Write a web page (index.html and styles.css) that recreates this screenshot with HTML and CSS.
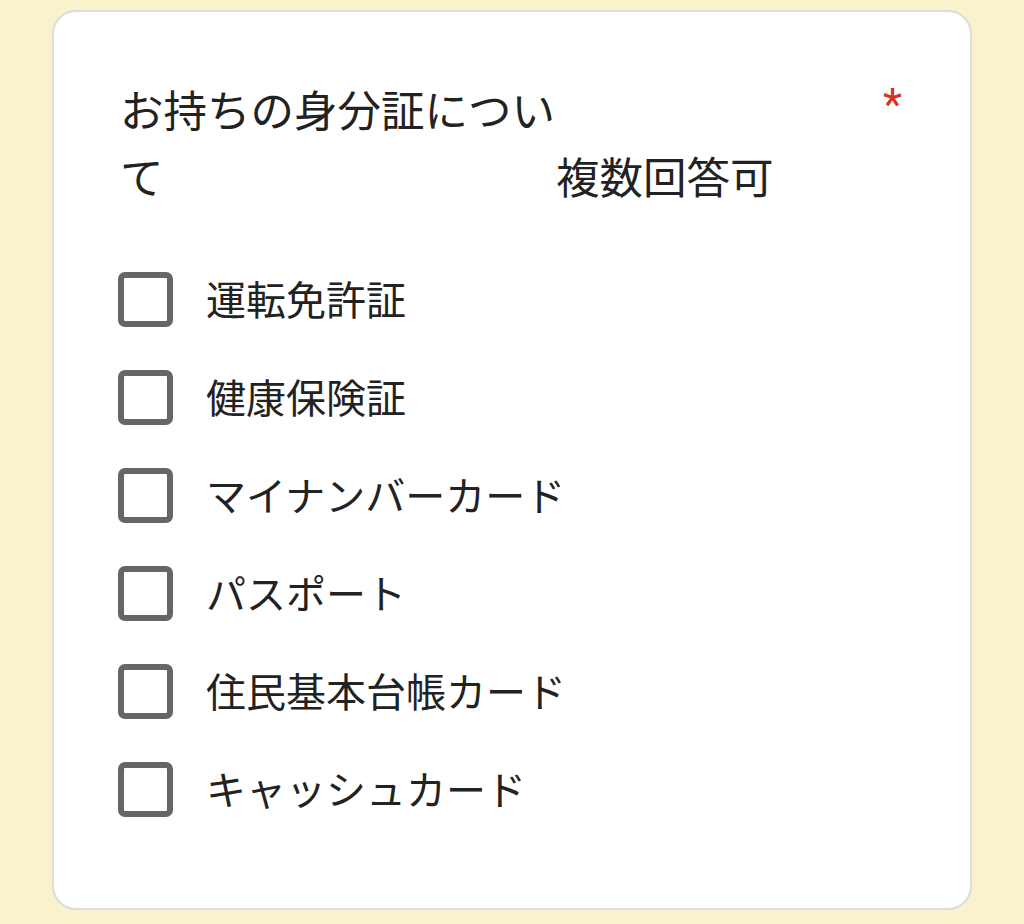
FILE: index.html
```html
<!DOCTYPE html>
<html lang="ja">
<head>
<meta charset="utf-8">
<link rel="stylesheet" href="styles.css">
</head>
<body>
<div class="page">
  <div class="card">
    <div class="header">
      <div class="title"><span class="q-text">お持ちの身分証について</span><span class="note">複数回答可</span></div>
      <span class="required">*</span>
    </div>
    <div class="options">
      <label class="option"><span class="box"></span><span class="label">運転免許証</span></label>
      <label class="option"><span class="box"></span><span class="label">健康保険証</span></label>
      <label class="option"><span class="box"></span><span class="label">マイナンバーカード</span></label>
      <label class="option"><span class="box"></span><span class="label">パスポート</span></label>
      <label class="option"><span class="box"></span><span class="label">住民基本台帳カード</span></label>
      <label class="option"><span class="box"></span><span class="label">キャッシュカード</span></label>
    </div>
  </div>
</div>
</body>
</html>
```

FILE: styles.css
```css
html, body {
  margin: 0;
  padding: 0;
  background: #f9f2cd;
}
body {
  font-family: "Noto Sans CJK JP", "Noto Sans", sans-serif;
  color: #222222;
}
.page {
  padding: 10px 52px 14px 52px;
}
.card {
  background: #fff;
  border: 2px solid #dcdcdc;
  border-radius: 24px;
  padding: 63px 68px 88px 64px;
  min-height: 745px;
}
.header {
  display: flex;
  justify-content: space-between;
  align-items: flex-start;
  padding-left: 2px;
}
.title {
  font-size: 43.5px;
  line-height: 67px;
}
.q-text {
  display: inline-block;
  width: 436px;
}
.required {
  color: #d93025;
  font-family: "Roboto", sans-serif;
  font-size: 44px;
  line-height: 60px;
}
.options {
  display: flex;
  flex-direction: column;
  gap: 43px;
  margin-top: 63px;
}
.option {
  display: flex;
  align-items: center;
  gap: 33px;
  height: 55px;
}
.box {
  width: 43px;
  height: 43px;
  border: 6px solid #666666;
  border-radius: 7px;
  flex: none;
}
.label {
  font-size: 40px;
  line-height: 54px;
  padding-bottom: 4px;
}
```
